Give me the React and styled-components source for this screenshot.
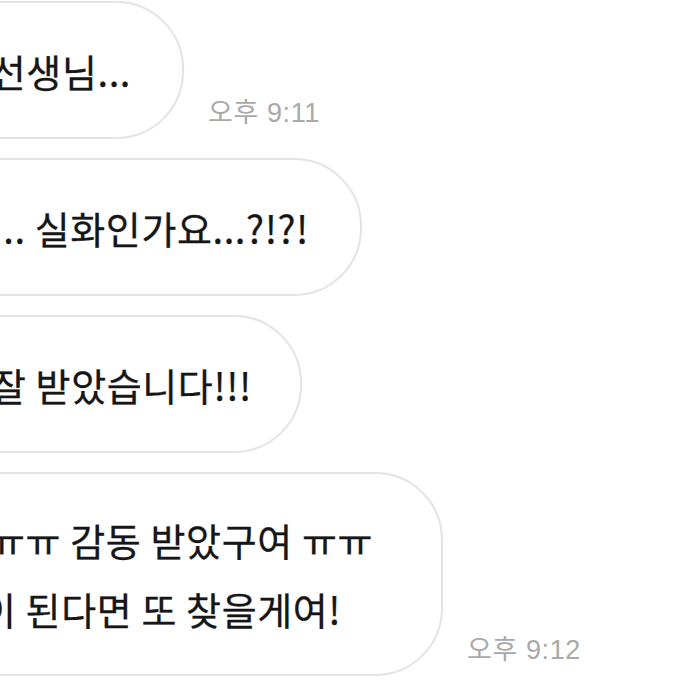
import React from "react";
import styled, { createGlobalStyle } from "styled-components";

const Global = createGlobalStyle`
  html, body { margin: 0; padding: 0; background: #ffffff; overflow: hidden; }
  body { font-family: "Noto Sans CJK KR", "Noto Sans", sans-serif; }
`;

const Thread = styled.div`
  display: flex;
  flex-direction: column;
  gap: 19px;
  padding-top: 1px;
  width: 689px;
  height: 689px;
`;

const Row = styled.div`
  display: flex;
  align-items: flex-end;
  gap: 24px;
`;

const OVERHANG = 160;

const Bubble = styled.div`
  box-sizing: border-box;
  display: flex;
  justify-content: flex-end;
  align-items: center;
  flex-shrink: 0;
  margin-left: -${OVERHANG}px;
  width: ${(p) => p.$right + OVERHANG}px;
  height: ${(p) => p.$height}px;
  padding-right: ${(p) => p.$pad}px;
  background: #ffffff;
  border: 2px solid #e4e4e4;
  border-radius: 68px;
  box-shadow: 0 0 2px rgba(0, 0, 0, 0.04);
`;

const Text = styled.div`
  flex-shrink: 0;
  white-space: nowrap;
  text-align: left;
  color: #161616;
  font-size: 38px;
  font-weight: 400;
  letter-spacing: 0.6px;
  line-height: 69px;
  -webkit-text-stroke: 0.3px #161616;
`;

const Time = styled.span`
  flex-shrink: 0;
  margin-bottom: 11px;
  color: #a9a9a9;
  font-family: "Liberation Sans", "Noto Sans CJK KR", sans-serif;
  font-size: 27px;
  letter-spacing: 0.6px;
  line-height: 30px;
  white-space: nowrap;
`;

const messages = [
  { lines: ["아 선생님..."], right: 184, pad: 51, height: 138, time: "오후 9:11" },
  { lines: ["헐 선생님.. 실화인가요...?!?!"], right: 362, pad: 51, height: 138 },
  { lines: ["선물 잘 받았습니다!!!"], right: 302, pad: 48, height: 138 },
  {
    lines: ["정말 ㅠㅠ 감동 받았구여 ㅠㅠ", "인연이 된다면 또 찾을게여!"],
    right: 443,
    pad: 68,
    height: 204,
    time: "오후 9:12",
  },
];

export default function App() {
  return (
    <>
      <Global />
      <Thread>
        {messages.map((m, i) => (
          <Row key={i}>
            <Bubble $right={m.right} $pad={m.pad} $height={m.height}>
              <Text>
                {m.lines.map((l, j) => (
                  <div key={j}>{l}</div>
                ))}
              </Text>
            </Bubble>
            {m.time && <Time>{m.time}</Time>}
          </Row>
        ))}
      </Thread>
    </>
  );
}
